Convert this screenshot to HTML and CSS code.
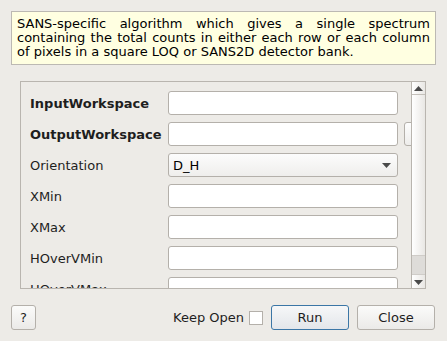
FILE: index.html
```html
<!DOCTYPE html>
<html lang="en">
<head>
    <meta charset="UTF-8">
    <title>Algorithm Dialog</title>
    <link rel="stylesheet" href="styles.css">
</head>
<body>

    <!-- Algorithm description -->
    <div class="desc">
        SANS-specific algorithm which gives a single spectrum containing the total counts in either each row or each column of pixels in a square LOQ or SANS2D detector bank.
    </div>

    <!-- Properties -->
    <div class="frame">
        <div class="props">
            <div class="row">
                <span class="label bold">InputWorkspace</span>
                <div class="field"></div>
            </div>
            <div class="row">
                <span class="label bold">OutputWorkspace</span>
                <div class="field"></div>
                <div class="browse"></div>
            </div>
            <div class="row">
                <span class="label">Orientation</span>
                <div class="field combo">
                    <span>D_H</span>
                    <svg width="9" height="5" viewBox="0 0 9 5"><path d="M0 0 H9 L4.5 5 Z" fill="#4a4a4a"/></svg>
                </div>
            </div>
            <div class="row">
                <span class="label">XMin</span>
                <div class="field"></div>
            </div>
            <div class="row">
                <span class="label">XMax</span>
                <div class="field"></div>
            </div>
            <div class="row">
                <span class="label">HOverVMin</span>
                <div class="field"></div>
            </div>
            <div class="row">
                <span class="label">HOverVMax</span>
                <div class="field"></div>
            </div>
        </div>
        <div class="scrollbar">
            <div class="arrow up">
                <svg width="9" height="5" viewBox="0 0 9 5"><path d="M0 5 H9 L4.5 0 Z" fill="#4a4a4a"/></svg>
            </div>
            <div class="track">
                <div class="thumb"></div>
            </div>
            <div class="arrow down">
                <svg width="9" height="5" viewBox="0 0 9 5"><path d="M0 0 H9 L4.5 5 Z" fill="#4a4a4a"/></svg>
            </div>
        </div>
    </div>

    <!-- Buttons -->
    <div class="footer">
        <button class="btn help">?</button>
        <div class="spacer"></div>
        <span class="keep">Keep Open</span>
        <span class="check"></span>
        <button class="btn run">Run</button>
        <button class="btn">Close</button>
    </div>

</body>
</html>
```

FILE: styles.css
```css
body {
    margin: 0;
    background-color: #edebe7;
    font-family: "DejaVu Sans", sans-serif;
    font-size: 13px;
    color: #000;
}

.desc {
    margin: 11px 11px 0 11px;
    padding: 5px 5px 5px 5px;
    height: 42px;
    line-height: 14px;
    background-color: #ffffe1;
    border: 1px solid #bcb9b3;
    text-align: justify;
}

.frame {
    display: flex;
    margin: 16px 21px 0 20px;
    height: 206px;
    border: 1px solid #b9b5af;
}

.props {
    flex: 1;
    overflow: hidden;
    padding: 9px 0 0 9px;
    display: flex;
    flex-direction: column;
    gap: 7px;
}

.row {
    display: flex;
    align-items: center;
    flex-shrink: 0;
    height: 24px;
}

.label {
    width: 138px;
    flex-shrink: 0;
    color: #1e1e1e;
}

.bold {
    font-weight: bold;
}

.field {
    width: 228px;
    height: 22px;
    flex-shrink: 0;
    background-color: #fff;
    border: 1px solid #b4b0aa;
    border-radius: 3px;
}

.combo {
    display: flex;
    align-items: center;
    justify-content: space-between;
    padding: 0 6px 0 4px;
    width: 218px;
    background: linear-gradient(#fcfcfc, #efeeec);
}

.browse {
    width: 20px;
    height: 22px;
    flex-shrink: 0;
    margin-left: 6px;
    border: 1px solid #b4b0aa;
    border-radius: 3px;
    background: linear-gradient(#fdfdfd, #eeedeb);
}

.scrollbar {
    width: 13px;
    display: flex;
    flex-direction: column;
    border-left: 1px solid #b9b5af;
    background: linear-gradient(to right, #ffffff, #e9e7e4);
}

.arrow {
    height: 12px;
    display: flex;
    align-items: center;
    justify-content: center;
}

.arrow.up {
    border-bottom: 1px solid #c4c0ba;
}

.track {
    flex: 1;
    display: flex;
    flex-direction: column;
    justify-content: flex-end;
}

.thumb {
    height: 18px;
    margin-bottom: 1px;
    background-color: #dedcd9;
    border-top: 1px solid #cfccc8;
    border-bottom: 1px solid #cfccc8;
}

.footer {
    display: flex;
    align-items: center;
    gap: 8px;
    margin: 16px 12px 0 11px;
}

.spacer {
    flex: 1;
}

.btn {
    height: 25px;
    width: 78px;
    padding: 0;
    font-family: "DejaVu Sans", sans-serif;
    font-size: 13px;
    color: #1e1e1e;
    background: linear-gradient(#fbfbfa, #ebeae8);
    border: 1px solid #b4b0aa;
    border-radius: 3px;
}

.help {
    width: 25px;
}

.run {
    border-color: #3b76a6;
    background: linear-gradient(#f6f7f8, #e3e6ea);
}

.keep {
    margin-right: -3px;
    color: #1e1e1e;
}

.check {
    width: 12px;
    height: 12px;
    background-color: #fff;
    border: 1px solid #b4b0aa;
}
```
